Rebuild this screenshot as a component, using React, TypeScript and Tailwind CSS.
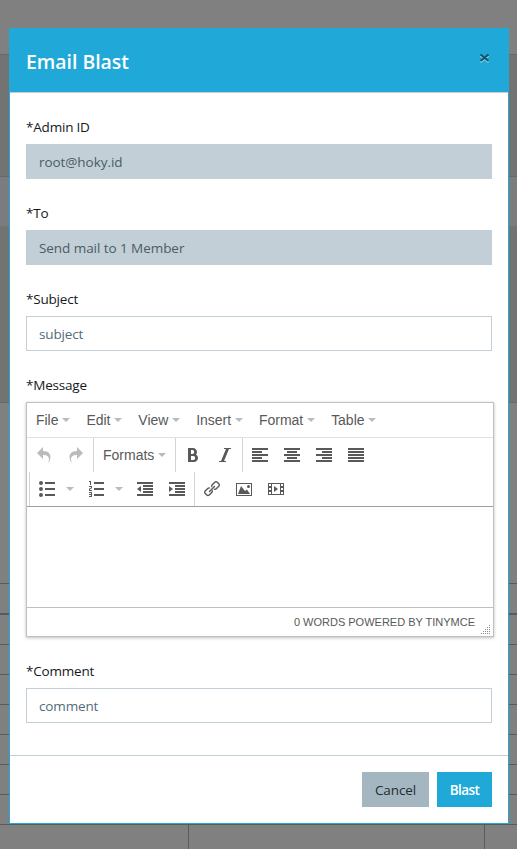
import type { ReactNode } from "react";

const ICONS = {
  undo: "M761.862 1024c113.726-206.032 132.888-520.306-313.862-509.824v253.824l-384-384 384-384v248.372c534.962-13.942 594.57 472.214 313.862 775.628z",
  redo: "M576 248.372v-248.372l384 384-384 384v-253.824c-446.75-10.482-427.588 303.792-313.86 509.824-280.712-303.414-221.1-789.57 313.86-775.628z",
  bold: "M707.88 484.652c37.498-44.542 60.12-102.008 60.12-164.652 0-141.16-114.842-256-256-256h-320v896h384c141.158 0 256-114.842 256-256 0-92.956-49.798-174.496-124.12-219.348zM384 192h101.5c55.968 0 101.5 57.42 101.5 128s-45.532 128-101.5 128h-101.5v-256zM543 832h-159v-256h159c58.45 0 106 57.42 106 128s-47.55 128-106 128z",
  italic: "M896 64v64h-128l-320 768h128v64h-448v-64h128l320-768h-128v-64z",
  left: "M0 64h1024v128h-1024zM0 256h640v128h-640zM0 640h640v128h-640zM0 448h1024v128h-1024zM0 832h1024v128h-1024z",
  center: "M0 64h1024v128h-1024zM192 256h640v128h-640zM192 640h640v128h-640zM0 448h1024v128h-1024zM0 832h1024v128h-1024z",
  right: "M0 64h1024v128h-1024zM384 256h640v128h-640zM384 640h640v128h-640zM0 448h1024v128h-1024zM0 832h1024v128h-1024z",
  justify: "M0 64h1024v128h-1024zM0 256h1024v128h-1024zM0 448h1024v128h-1024zM0 640h1024v128h-1024zM0 832h1024v128h-1024z",
  bullets: "M384 64h640v128h-640zM384 448h640v128h-640zM384 832h640v128h-640zM0 128a128 128 0 1 0 256 0a128 128 0 1 0-256 0zM0 512a128 128 0 1 0 256 0a128 128 0 1 0-256 0zM0 896a128 128 0 1 0 256 0a128 128 0 1 0-256 0z",
  numbers: "M384 832h640v128h-640zM384 448h640v128h-640zM384 64h640v128h-640zM192 0v256h-64v-192h-64v-64zM128 526v50h128v64h-192v-146l128-60v-50h-128v-64h192v146zM256 704v320h-192v-64h128v-64h-128v-64h128v-64h-128v-64z",
  outdent: "M0 64h1024v128h-1024zM384 256h640v128h-640zM384 448h640v128h-640zM384 640h640v128h-640zM0 832h1024v128h-1024zM256 320v384l-256-192z",
  indent: "M0 64h1024v128h-1024zM384 256h640v128h-640zM384 448h640v128h-640zM384 640h640v128h-640zM0 832h1024v128h-1024zM0 320v384l256-192z",
  link: "M320 704c17.6 17.6 47.274 16.726 65.942-1.942l316.118-316.116c18.668-18.668 19.54-48.342 1.94-65.942s-47.274-16.726-65.942 1.942l-316.116 316.116c-18.668 18.668-19.542 48.342-1.942 65.942zM476.888 624.888c4.56 9.048 6.99 19.158 6.99 29.696 0 17.616-6.744 34.060-18.992 46.308l-163.382 163.382c-12.248 12.248-28.694 18.992-46.308 18.992s-34.060-6.744-46.308-18.992l-99.382-99.382c-12.248-12.248-18.992-28.694-18.992-46.308s6.744-34.060 18.992-46.308l163.382-163.382c12.248-12.248 28.694-18.994 46.308-18.994 10.536 0 20.644 2.430 29.696 6.990l65.338-65.338c-27.87-21.41-61.44-32.16-94.992-32.16-39.962 0-79.916 15.166-110.308 45.558l-163.382 163.382c-60.67 60.67-60.67 159.948 0 220.618l99.382 99.382c30.392 30.392 70.344 45.558 110.308 45.558s79.916-15.166 110.308-45.558l163.382-163.382c55.82-55.82 60.238-144.298 13.344-205.344zM978.498 144.884l-99.382-99.382c-30.392-30.392-70.344-45.558-110.308-45.558s-79.916 15.166-110.308 45.558l-163.382 163.382c-55.82 55.82-60.238 144.298-13.344 205.344l65.392-65.394c-4.56-9.05-6.99-19.158-6.99-29.696 0-17.614 6.746-34.060 18.994-46.308l163.382-163.382c12.248-12.248 28.694-18.992 46.308-18.992s34.060 6.744 46.308 18.992l99.382 99.382c12.248 12.248 18.992 28.694 18.992 46.308s-6.744 34.060-18.992 46.308l-163.382 163.382c-12.248 12.248-28.694 18.994-46.308 18.994-10.536 0-20.644-2.430-29.696-6.990l-65.338 65.338c27.87 21.41 61.44 32.16 94.992 32.16 39.962 0 79.916-15.166 110.308-45.558l163.382-163.382c60.67-60.67 60.67-159.948 0-220.618z",
  image: "M0 128v832h1024v-832h-1024zM960 896h-896v-704h896v704zM704 352a96 96 0 1 0 192 0a96 96 0 1 0-192 0zM896 832h-768l192-512 256 320 128-96z",
  media: "M0 128v768h1024v-768h-1024zM192 832h-128v-128h128v128zM192 576h-128v-128h128v128zM192 320h-128v-128h128v128zM768 832h-512v-640h512v640zM960 832h-128v-128h128v128zM960 576h-128v-128h128v128zM960 320h-128v-128h128v128zM384 320v384l256-192z",
};

function Tool({ name, disabled = false }: { name: keyof typeof ICONS; disabled?: boolean }) {
  return (
    <button className={disabled ? "px-2 opacity-40" : "px-2"} aria-label={name}>
      <svg className="block size-4 fill-[#595959]" viewBox="0 0 1024 1024" fillRule="evenodd">
        <path d={ICONS[name]} />
      </svg>
    </button>
  );
}

function Caret() {
  return <span className="h-0 w-0 shrink-0 border-x-4 border-t-4 border-x-transparent border-t-[#b5bcc2]" />;
}

function Divider() {
  return <span className="w-px shrink-0 self-stretch bg-[#d4d4d4]" />;
}

function Field({ label, children }: { label: string; children: ReactNode }) {
  return (
    <div>
      <div className="h-[26px] text-[13.5px] leading-[18px] tracking-[-0.2px] text-[#15191c]">{label}</div>
      {children}
    </div>
  );
}

function Box({ children, filled = false }: { children: ReactNode; filled?: boolean }) {
  return (
    <div
      className={
        filled
          ? "flex h-[35px] items-center border border-[#c2cfd6] bg-[#c2cfd6] px-3 pt-0.5 text-[13.5px] tracking-[-0.06px] text-[#4a5c66]"
          : "flex h-[35px] items-center border border-[#c2cfd6] bg-white px-3 pt-0.5 text-[13.5px] tracking-[-0.15px] text-[#536c79]"
      }
    >
      {children}
    </div>
  );
}

function Editor() {
  return (
    <div className="h-[235px] w-[468px] border border-[#c0c0c0] bg-white font-['Liberation_Sans',Arial,sans-serif] text-sm text-[#595959] shadow-[0_1px_3px_rgba(0,0,0,0.25)]">
      <div className="flex h-[35px] items-center gap-4 border-b border-[#e0e0e0] pl-[9px] tracking-[-0.02px]">
        {["File", "Edit", "View", "Insert", "Format", "Table"].map((item) => (
          <div key={item} className="flex items-center gap-[3.9px]">
            {item}
            <Caret />
          </div>
        ))}
      </div>
      <div className="flex h-[34px] items-center">
        <div className="ml-px flex w-[65px]">
          <Tool name="undo" disabled />
          <Tool name="redo" disabled />
        </div>
        <Divider />
        <div className="flex w-[81px] items-center gap-1 pl-[9px]">
          Formats
          <Caret />
        </div>
        <Divider />
        <div className="flex w-[66px] pl-px">
          <Tool name="bold" />
          <Tool name="italic" />
        </div>
        <Divider />
        <div className="flex pl-px">
          <Tool name="left" />
          <Tool name="center" />
          <Tool name="right" />
          <Tool name="justify" />
        </div>
      </div>
      <div className="flex h-[35px] items-center border-b border-[#9e9e9e] pl-0.5">
        <Divider />
        <div className="flex w-[164px] items-center pl-px">
          <Tool name="bullets" />
          <span className="flex w-[17px] pl-[3px]"><Caret /></span>
          <Tool name="numbers" />
          <span className="flex w-[17px] pl-[3px]"><Caret /></span>
          <Tool name="outdent" />
          <Tool name="indent" />
        </div>
        <Divider />
        <div className="flex pl-px">
          <Tool name="link" />
          <Tool name="image" />
          <Tool name="media" />
        </div>
      </div>
      <div className="h-[100px]" />
      <div className="flex h-[29px] justify-end border-t border-[#c0c0c0] pr-0.5 text-[11px] leading-[28px]">
        <span>0 WORDS POWERED BY TINYMCE</span>
        <svg className="mt-[17px] ml-[5px] h-[10px] w-[11px] fill-[#8c8c8c]" viewBox="0 0 11 10">
          {[0, 1, 2, 3, 4].flatMap((row) =>
            Array.from({ length: row + 1 }, (_, i) => (
              <rect key={`${row}-${i}`} x={9 - i * 2} y={row * 2} width="1" height="1" />
            )),
          )}
        </svg>
      </div>
    </div>
  );
}

function Backdrop() {
  return (
    <div className="flex h-full flex-col bg-[#808080]">
      <div className="h-[55px] shrink-0 border-b border-[#616a70]" />
      <div className="h-[122px] shrink-0 border-b border-[#616a70] bg-[#737373]" />
      <div className="h-[49px] shrink-0 bg-[#7b7c7e]" />
      <div className="h-[177px] shrink-0 border-b border-[#616a70] bg-[#727472]" />
      <div className="h-[181px] shrink-0 border-b border-[#525c64]" />
      <div className="h-[31px] shrink-0 border-b-2 border-[#525c64]" />
      {[0, 1, 2, 3, 4, 5, 6].map((row) => (
        <div key={row} className="h-[30px] shrink-0 border-b border-[#525c64]" />
      ))}
      <div className="flex grow">
        <div className="w-[189px] border-r border-[#525c64]" />
        <div className="w-[296px] border-r border-[#525c64]" />
      </div>
    </div>
  );
}

export default function App() {
  return (
    <div className="relative h-[849px] w-[517px] overflow-hidden font-['Open_Sans','Noto_Sans',sans-serif]">
      <Backdrop />
      <div className="absolute top-[28px] left-[9px] flex h-[796px] w-[500px] flex-col border border-[#20a8d8] bg-white">
        <header className="flex h-16 shrink-0 justify-between border-b border-[#c2cfd6] bg-[#20a8d8] px-4 text-white">
          <h4 className="mt-[18px] text-[19.4px] leading-[30px] font-semibold">Email Blast</h4>
          <svg className="mt-6 mr-0.5 size-[11px]" viewBox="0 0 11 11" aria-label="Close">
            <path d="M1.5 2.7l8 6.6M9.5 2.7l-8 6.6" stroke="#8fd2ea" strokeWidth="1.8" />
            <path d="M1.5 1.5l8 6.6M9.5 1.5l-8 6.6" stroke="#10546c" strokeWidth="2" />
          </svg>
        </header>
        <div className="flex flex-col gap-[25px] px-4 pt-[25px]">
          <Field label="*Admin ID"><Box filled>root@hoky.id</Box></Field>
          <Field label="*To"><Box filled>Send mail to 1 Member</Box></Field>
          <Field label="*Subject"><Box>subject</Box></Field>
          <Field label="*Message"><Editor /></Field>
          <Field label="*Comment"><Box>comment</Box></Field>
        </div>
        <footer className="mt-auto flex h-[68px] shrink-0 justify-end gap-2 border-t border-[#c2cfd6] px-4 pt-4 text-[13.5px]">
          <button className="h-[35px] w-[67px] bg-[#a4b7c1] pt-0.5 tracking-[-0.1px] text-[#232c31]">Cancel</button>
          <button className="h-[35px] w-[55px] bg-[#20a8d8] pt-0.5 font-semibold tracking-[-0.6px] text-white">Blast</button>
        </footer>
      </div>
    </div>
  );
}
